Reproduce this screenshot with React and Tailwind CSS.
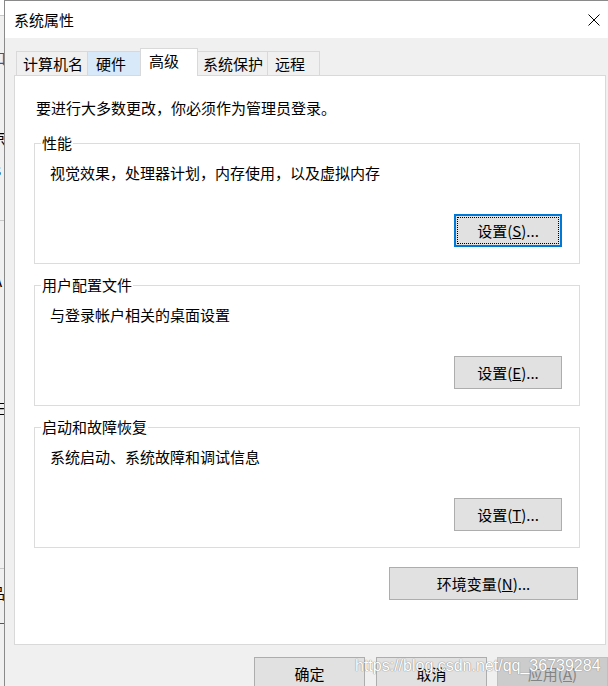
import React from 'react';

const font = { fontFamily: '"Noto Sans CJK SC", "Noto Sans", sans-serif' };

function WinButton({ children, focused, disabled, className = '' }) {
  if (focused) {
    return (
      <button className={`h-[33px] border-2 border-[#0078d7] bg-[#e1e1e1] p-[1px] ${className}`}>
        <div className="flex h-full w-full items-center justify-center border border-dotted border-black text-[15px] leading-[20px]">
          {children}
        </div>
      </button>
    );
  }
  return (
    <button
      className={`flex h-[33px] items-center justify-center border text-[15px] leading-[20px] ${
        disabled ? 'border-[#bfbfbf] bg-[#cccccc] text-[#838383]' : 'border-[#adadad] bg-[#e1e1e1] text-black'
      } ${className}`}
    >
      {children}
    </button>
  );
}

function Group({ title, desc, button, focused }) {
  return (
    <fieldset className="h-[131px] border border-[#dcdcdc] px-[15px]">
      <legend className="-ml-[9px] px-[1px] text-[15px] leading-[20px]">{title}</legend>
      <p className="mt-[10px] text-[15px] leading-[20px]">{desc}</p>
      <div className="mt-[31px] flex justify-end pr-[2px]">
        <WinButton focused={focused} className="w-[108px]">
          {button}
        </WinButton>
      </div>
    </fieldset>
  );
}

const tabs = [
  { label: '计算机名', w: 'w-[72px]', pl: 'pl-[6px]' },
  { label: '硬件', w: 'w-[54px]', pl: 'pl-[8px]', hover: true },
  { label: '高级', w: 'w-[58px]', pl: 'pl-[8px]', active: true },
  { label: '系统保护', w: 'w-[71px]', pl: 'pl-[5px]' },
  { label: '远程', w: 'w-[53px]', pl: 'pl-[7px]' },
];

export default function App() {
  return (
    <div className="relative flex h-[686px] w-[608px] overflow-hidden bg-[#f0f0f0] text-black" style={font}>
      {/* sliver of the window behind */}
      <div className="flex w-[4px] flex-col overflow-hidden text-[15px] leading-[20px]">
        <div className="h-[16px] border-b border-[#c8c8c8] bg-white" />
        <div className="mt-[32px] -ml-[9px] text-[#1a5fb4]">口</div>
        <div className="mt-[60px] -ml-[9px]">京</div>
        <div className="mt-[12px] -ml-[6px]">s</div>
        <div className="mt-[40px] h-px bg-[#c8c8c8]" />
        <div className="mt-[50px] -ml-[7px]">A</div>
        <div className="mt-[107px] -ml-[8px]">三</div>
        <div className="mt-[150px] h-px bg-[#c8c8c8]" />
        <div className="mt-[14px] -ml-[10px]">品</div>
        <div className="mt-[20px] h-px w-[4px] bg-[#555]" />
      </div>

      {/* dialog */}
      <div className="flex flex-1 flex-col border-l border-t border-[#8a8a8a]">
        <div className="flex h-[37px] shrink-0 items-center justify-between bg-white pl-[9px] pr-[7px]">
          <span className="text-[15px] leading-[20px]">系统属性</span>
          <svg width="12" height="12" viewBox="0 0 12 12" className="mr-[1px]">
            <path d="M0.5 0.5 L11.5 11.5 M11.5 0.5 L0.5 11.5" stroke="#000" strokeWidth="1" fill="none" />
          </svg>
        </div>

        <div className="flex flex-1 flex-col pl-[9px] pr-[2px] pt-[11px]">
          {/* tabs */}
          <div className="flex h-[26px] items-end pl-[2px]">
            {tabs.map((t) =>
              t.active ? (
                <div
                  key={t.label}
                  className={`relative z-10 -mb-px h-[28px] ${t.w} ${t.pl} -ml-px border border-b-0 border-[#d9d9d9] bg-white pt-[2px] text-[15px] leading-[20px]`}
                >
                  {t.label}
                </div>
              ) : (
                <div
                  key={t.label}
                  className={`h-[24px] ${t.w} ${t.pl} -ml-px first:ml-0 border border-b-0 pt-[2px] text-[15px] leading-[20px] ${
                    t.hover ? 'border-[#c5dcf2] bg-[#d8eaf9]' : 'border-[#d9d9d9] bg-[#f0f0f0]'
                  }`}
                >
                  {t.label}
                </div>
              )
            )}
          </div>

          {/* tab page */}
          <div className="h-[570px] border border-[#d9d9d9] bg-white pl-[19px] pr-[25px] pt-[22px]">
            <p className="ml-[2px] text-[15px] leading-[20px]">要进行大多数更改，你必须作为管理员登录。</p>

            <div className="mt-[15px] flex flex-col gap-[11px]">
              <Group
                title="性能"
                desc="视觉效果，处理器计划，内存使用，以及虚拟内存"
                focused
                button={<>设置(<span className="underline">S</span>)...</>}
              />
              <Group
                title="用户配置文件"
                desc="与登录帐户相关的桌面设置"
                button={<>设置(<span className="underline">E</span>)...</>}
              />
              <Group
                title="启动和故障恢复"
                desc="系统启动、系统故障和调试信息"
                button={<>设置(<span className="underline">T</span>)...</>}
              />
            </div>

            <div className="mt-[19px] flex justify-end pr-[2px]">
              <WinButton className="h-[32px] w-[189px]">
                环境变量(<span className="underline">N</span>)...
              </WinButton>
            </div>
          </div>

          {/* dialog buttons */}
          <div className="mt-[12px] -mr-[2px] flex justify-end gap-[11px]">
            <WinButton className="h-[36px] w-[111px] items-start pt-[6px]">确定</WinButton>
            <WinButton className="h-[36px] w-[111px] items-start pt-[6px]">取消</WinButton>
            <WinButton disabled className="-ml-px h-[36px] w-[111px] items-start pt-[6px]">
              应用(<span className="underline">A</span>)
            </WinButton>
          </div>
        </div>
      </div>

      {/* blog watermark */}
      <div
        className="pointer-events-none absolute left-[355px] top-[656px] text-[16px] leading-[20px] text-white [text-shadow:0_0_1px_#8a8a8a,0_0_1px_#8a8a8a]"
        style={{ fontFamily: '"Liberation Sans", Arial, sans-serif' }}
      >
        https://blog.csdn.net/qq_36739284
      </div>
    </div>
  );
}
